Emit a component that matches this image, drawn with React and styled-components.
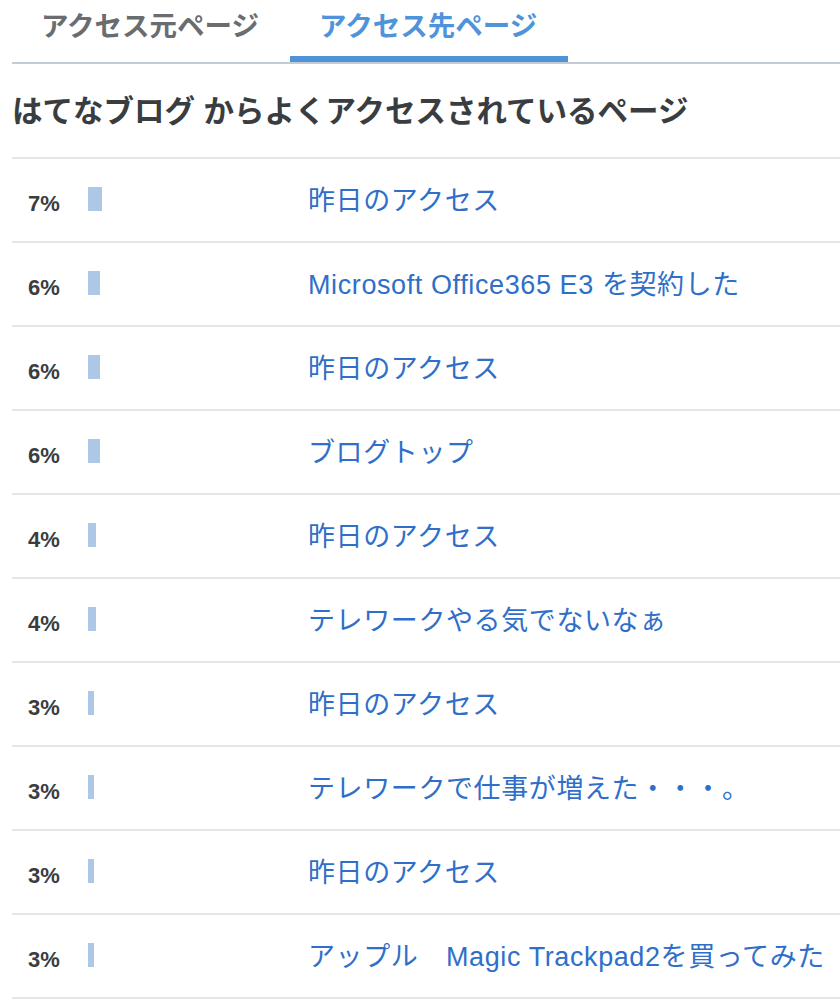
import React from "react";
import styled, { createGlobalStyle } from "styled-components";

const Global = createGlobalStyle`
  html, body { margin: 0; padding: 0; background: #fff; }
  body {
    font-family: "Liberation Sans", "Noto Sans CJK JP", sans-serif;
    overflow: hidden;
  }
`;

const Page = styled.div`
  padding-left: 12px;
`;

const TabBar = styled.div`
  display: flex;
  border-bottom: 2px solid #c3ccd5;
`;

const Tab = styled.div`
  padding: 7px 31px 0 29px;
  box-sizing: border-box;
  height: 62px;
  font-size: 27.5px;
  line-height: 40px;
  font-weight: 700;
  color: ${(p) => (p.$active ? "#4f94da" : "#6a6d70")};
  border-bottom: 6px solid ${(p) => (p.$active ? "#4e93d8" : "transparent")};
  white-space: nowrap;
`;

const Heading = styled.h2`
  margin: 0;
  padding: 25px 0 23px;
  font-size: 30.5px;
  line-height: 45px;
  font-weight: 700;
  color: #3a3d40;
  white-space: nowrap;
`;

const List = styled.div`
  border-bottom: 2px solid #e2e6ea;
`;

const Row = styled.div`
  display: grid;
  grid-template-columns: 60px 220px 1fr;
  align-items: center;
  height: 84px;
  box-sizing: border-box;
  padding-left: 16px;
  border-top: 2px solid #e2e6ea;
`;

const Pct = styled.span`
  font-size: 22px;
  font-weight: 700;
  color: #3a3d40;
  margin-top: 8px;
`;

const Bar = styled.div`
  height: 24px;
  background: #adc8e6;
  margin-bottom: 3px;
`;

const Link = styled.a`
  font-size: 27px;
  color: #2f6fc9;
  text-decoration: none;
  white-space: nowrap;
  letter-spacing: 0.6px;
  margin-bottom: 4px;
`;

const rows = [
  [7, "昨日のアクセス"],
  [6, "Microsoft Office365 E3 を契約した"],
  [6, "昨日のアクセス"],
  [6, "ブログトップ"],
  [4, "昨日のアクセス"],
  [4, "テレワークやる気でないなぁ"],
  [3, "昨日のアクセス"],
  [3, "テレワークで仕事が増えた・・・。"],
  [3, "昨日のアクセス"],
  [3, "アップル　Magic Trackpad2を買ってみた"],
];

export default function App() {
  return (
    <Page>
      <Global />
      <TabBar>
        <Tab>アクセス元ページ</Tab>
        <Tab $active>アクセス先ページ</Tab>
      </TabBar>
      <Heading>はてなブログ からよくアクセスされているページ</Heading>
      <List>
        {rows.map(([p, t], i) => (
          <Row key={i}>
            <Pct>{p}%</Pct>
            <div>
              <Bar style={{ width: p * 2 }} />
            </div>
            <Link href="#">{t}</Link>
          </Row>
        ))}
      </List>
    </Page>
  );
}
